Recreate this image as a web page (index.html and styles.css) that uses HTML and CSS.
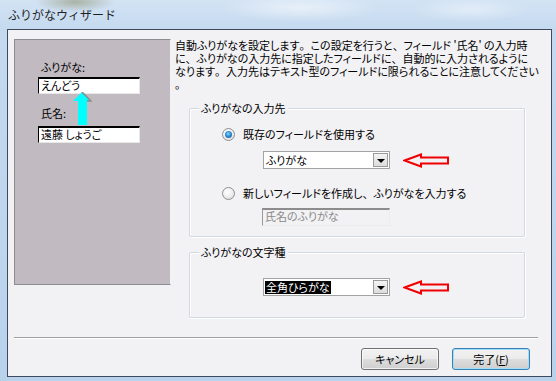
FILE: index.html
```html
<!DOCTYPE html>
<html lang="ja">
<head>
<meta charset="utf-8">
<title>ふりがなウィザード</title>
<link rel="stylesheet" href="styles.css">
</head>
<body>
<div class="window">
  <div class="titlebar"><span class="title">ふりがなウィザード</span></div>
  <div class="client">
    <div class="main">
      <div class="preview">
        <div class="plabel">ふりがな:</div>
        <div class="pinput">えんどう</div>
        <div class="plabel second">氏名:</div>
        <div class="pinput">遠藤 しょうご</div>
        <svg class="uparrow" width="20" height="34" viewBox="0 0 20 34">
          <polygon points="10,0 19,9 15,9 15,33 6,33 6,9 1,9" fill="#00ffff"/>
          <polyline points="10,0 19,9 15,9" fill="none" stroke="#8a8a8a" stroke-width="1.5"/>
        </svg>
      </div>
      <div class="content">
        <p class="desc">自動ふりがなを設定します<span class="pw">。</span>この設定を行うと<span class="pw">、</span>フィールド '氏名' の入力時<br>に<span class="pw">、</span>ふりがなの入力先に指定したフィールドに<span class="pw">、</span>自動的に入力されるように<br>なります<span class="pw">。</span>入力先はテキスト型のフィールドに限られることに注意してください<br><span class="pw">。</span></p>
        <div class="group g1">
          <span class="legend">ふりがなの入力先</span>
          <div class="radiorow"><span class="radio checked"></span><span>既存のフィールドを使用する</span></div>
          <div class="comborow">
            <div class="combo"><span class="ctext">ふりがな</span><span class="dropbtn"><span class="tri"></span></span></div>
            <svg class="redarrow" width="46" height="15" viewBox="0 0 46 15"><polygon points="1.5,7.5 18,1.5 18,4.5 45,4.5 45,10.5 18,10.5 18,13.5" fill="none" stroke="#f00000" stroke-width="2"/></svg>
          </div>
          <div class="radiorow r2"><span class="radio"></span><span>新しいフィールドを作成し<span class="pw">、</span>ふりがなを入力する</span></div>
          <div class="disabled">氏名のふりがな</div>
        </div>
        <div class="group g2">
          <span class="legend">ふりがなの文字種</span>
          <div class="comborow">
            <div class="combo"><span class="ctext sel">全角ひらがな</span><span class="dropbtn"><span class="tri"></span></span></div>
            <svg class="redarrow" width="46" height="15" viewBox="0 0 46 15"><polygon points="1.5,7.5 18,1.5 18,4.5 45,4.5 45,10.5 18,10.5 18,13.5" fill="none" stroke="#f00000" stroke-width="2"/></svg>
          </div>
        </div>
      </div>
    </div>
    <div class="sep"></div>
    <div class="buttons">
      <button class="btn">キャンセル</button>
      <button class="btn default">完了(<u>F</u>)</button>
    </div>
  </div>
</div>
</body>
</html>
```

FILE: styles.css
```css
html, body {
  margin: 0;
  padding: 0;
}
body {
  width: 556px;
  height: 381px;
  overflow: hidden;
  font-family: "Noto Sans CJK JP", "Noto Sans", sans-serif;
  font-size: 11px;
  color: #000;
  background: #bfd5ec;
}
.window {
  box-sizing: border-box;
  width: 556px;
  height: 381px;
  padding: 0 4px 4px 7px;
  display: flex;
  flex-direction: column;
  background:
    radial-gradient(ellipse 40px 10px at 75px 2px, rgba(120,120,70,0.45), rgba(120,120,70,0) 100%),
    radial-gradient(ellipse 80px 14px at 300px 8px, rgba(255,255,255,0.5), rgba(255,255,255,0) 100%),
    radial-gradient(ellipse 60px 12px at 470px 10px, rgba(255,255,255,0.4), rgba(255,255,255,0) 100%),
    linear-gradient(180deg, #d3e3f4 0%, #c4d9ef 8%, #b9d2ec 100%);
}
.titlebar {
  height: 29px;
  display: flex;
  align-items: center;
  padding-left: 1px;
}
.title {
  font-size: 12px;
  color: #1e1e1e;
}
.client {
  flex: 1;
  border: 1px solid #3c4a5c;
  background: #f2f1f4;
  display: flex;
  flex-direction: column;
}
.main {
  height: 307px;
  box-sizing: border-box;
  padding: 9px 0 0 6px;
  display: flex;
}
.preview {
  position: relative;
  box-sizing: border-box;
  width: 157px;
  height: 246px;
  border: 1px solid;
  border-color: #8f8b91 #f4f4f4 #8f8b91 #8f8b91;
  background: #c1bbc1;
  padding: 21px 0 0 23px;
  font-feature-settings: "palt";
}
.plabel {
  line-height: 13px;
  margin-left: 3px;
}
.plabel.second {
  margin-top: 13px;
}
.pinput {
  box-sizing: border-box;
  width: 102px;
  height: 17px;
  margin-top: 3px;
  background: #fff;
  border-style: solid;
  border-width: 2px 1px 1px 1px;
  border-color: #000 #e8e8e8 #e8e8e8 #000;
  padding-left: 2px;
  line-height: 13px;
}
.plabel.second + .pinput {
  margin-top: 6px;
}
.uparrow {
  position: absolute;
  left: 57px;
  top: 52px;
}
.content {
  margin-left: 4px;
  width: 349px;
  display: flex;
  flex-direction: column;
  font-feature-settings: "palt";
}
.pw {
  font-feature-settings: normal;
}
.desc {
  margin: 0;
  line-height: 13px;
  white-space: nowrap;
}
.group {
  position: relative;
  margin-left: 14px;
  box-sizing: border-box;
  width: 336px;
  border: 1px solid #d3d9e2;
  border-radius: 2px;
  box-shadow: inset 1px 1px 0 #ffffff, 1px 1px 0 #ffffff;
  display: flex;
  flex-direction: column;
}
.g1 {
  margin-top: 17px;
  height: 129px;
  padding: 17px 0 0 32px;
}
.g2 {
  margin-top: 15px;
  height: 66px;
  padding: 25px 0 0 32px;
}
.legend {
  position: absolute;
  left: 9px;
  top: -8px;
  padding: 0 2px;
  line-height: 14px;
  background: #f2f1f4;
}
.radiorow {
  display: flex;
  align-items: center;
  gap: 8px;
  height: 16px;
}
.radiorow.r2 {
  margin-top: 16px;
}
.radio {
  position: relative;
  box-sizing: border-box;
  width: 13px;
  height: 13px;
  border-radius: 50%;
  border: 1px solid #8e8f8f;
  background: radial-gradient(circle at 40% 35%, #ffffff 0%, #f0f0f0 45%, #d5d5d5 100%);
}
.radio.checked::after {
  content: "";
  position: absolute;
  left: 2px;
  top: 2px;
  width: 7px;
  height: 7px;
  border-radius: 50%;
  background: radial-gradient(circle at 45% 40%, #8ad7fb 0%, #2b8dd8 45%, #1b4f88 100%);
}
.comborow {
  display: flex;
  align-items: center;
  margin-left: 41px;
}
.g1 .comborow {
  margin-top: 9px;
}
.combo {
  box-sizing: border-box;
  width: 127px;
  height: 18px;
  background: #fff;
  border: 1px solid #a3a3a3;
  display: flex;
  align-items: center;
  justify-content: space-between;
  padding: 0 1px;
}
.ctext {
  line-height: 13px;
  padding: 0 1px;
}
.ctext.sel {
  background: #000;
  color: #fff;
}
.dropbtn {
  box-sizing: border-box;
  width: 15px;
  height: 14px;
  border: 1px solid #9a9a9a;
  background: linear-gradient(180deg, #f4f4f4, #dcdcdc);
  display: flex;
  align-items: center;
  justify-content: center;
}
.tri {
  width: 0;
  height: 0;
  border-left: 4px solid transparent;
  border-right: 4px solid transparent;
  border-top: 4px solid #000;
  margin-top: 1px;
}
.redarrow {
  margin-left: 13px;
}
.disabled {
  box-sizing: border-box;
  margin: 7px 0 0 40px;
  width: 128px;
  height: 18px;
  border-style: solid;
  border-width: 2px 1px 1px 1px;
  border-color: #8c8c8c #ececec #ececec #9a9a9a;
  color: #8a8a8a;
  line-height: 13px;
  padding-left: 2px;
}
.sep {
  height: 1px;
  background: #a0a0a0;
  border-bottom: 1px solid #ffffff;
  margin: 0 13px 0 6px;
}
.buttons {
  display: flex;
  justify-content: flex-end;
  gap: 13px;
  padding: 9px 21px 0 0;
}
.btn {
  box-sizing: border-box;
  width: 78px;
  height: 22px;
  padding: 0;
  font-family: "Noto Sans CJK JP", "Noto Sans", sans-serif;
  font-size: 11px;
  color: #000;
  border: 1px solid #707070;
  border-radius: 3px;
  background: linear-gradient(180deg, #f2f2f2 0%, #ebebeb 50%, #dddddd 51%, #cfcfcf 100%);
  box-shadow: inset 0 0 0 1px rgba(255,255,255,0.7);
  font-feature-settings: "palt";
}
.btn.default {
  border-color: #3c7fb1;
  box-shadow: inset 0 0 0 1px #9ee0fb;
}
.btn u {
  text-decoration: underline;
  text-underline-offset: 1px;
}
```
